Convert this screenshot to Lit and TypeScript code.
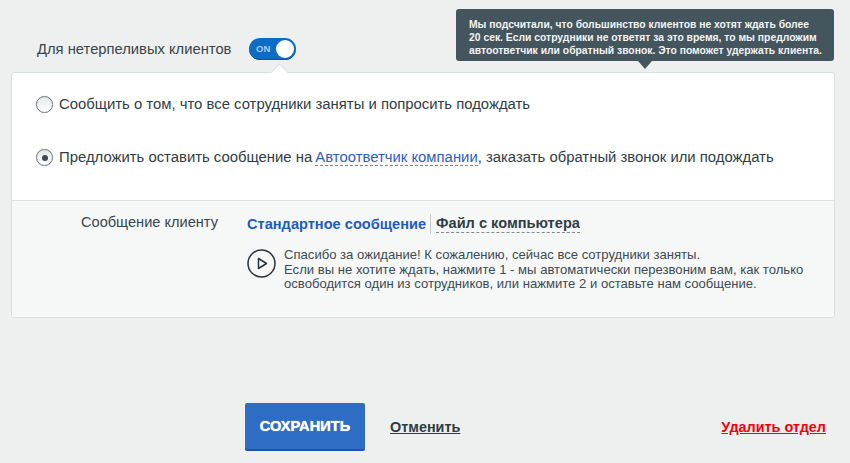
import { LitElement, html, css } from "lit";
import { customElement } from "lit/decorators.js";

@customElement("app-root")
export class AppRoot extends LitElement {
  static styles = css`
    :host { display: block; width: 850px; height: 463px; background: #eef0f0; position: relative; overflow: hidden;
      font-family: "Liberation Sans", Arial, sans-serif; color: #2f3d45; }
    .head { display: flex; align-items: center; height: 72px; padding: 0 0 0 37px; box-sizing: border-box; padding-top: 25px; }
    .head .label { font-size: 14.76px; width: 212px; color: #37454d; white-space: nowrap; }
    .toggle { width: 47px; height: 22px; border-radius: 11px; background: #0f6cc4; display: flex; align-items: center;
      justify-content: space-between; padding: 0 2px 0 7px; box-sizing: border-box; box-shadow: inset 0 -1px 0 #0a569f; }
    .toggle span { font-size: 9.5px; font-weight: 700; color: #a9cdee; }
    .knob { width: 18px; height: 18px; background: #fff; border-radius: 50%; }
    .card { margin: 0 15px 0 11px; background: #fff; border: 1px solid #d9e0e2; border-radius: 3px; position: relative; height: 246px; box-sizing: border-box; }
    .notch { position: absolute; left: 261px; top: -7px; width: 12px; height: 12px; background: #fff; border-left: 1px solid #d9e0e2; border-top: 1px solid #d9e0e2; transform: rotate(45deg) ; }
    .opts { height: 127px; box-sizing: border-box; padding: 22px 0 0 24px; display: flex; flex-direction: column; gap: 34px; }
    .opt { display: flex; align-items: center; gap: 6px; font-size: 14.87px; height: 19px; color: #2f3d45; white-space: nowrap; }
    .txt { padding-bottom: 2px; }
    .radio { width: 17px; height: 17px; border: 1px solid #6f7a80; border-radius: 50%; box-sizing: border-box; background: linear-gradient(#e4e7e8, #fff); display: flex; align-items: center; justify-content: center; box-shadow: 0 0 1px #9aa2a6; flex: none; }
    .radio.on::after { content: ""; width: 6px; height: 6px; border-radius: 50%; background: #3a4a55; }
    .link { color: #2d5ebf; border-bottom: 1px dashed #5b84d6; margin-left: -1px; }
    .bottom { background: #f6f8f8; border-top: 1px solid #d9e0e2; height: 117px; box-sizing: border-box; display: flex; padding-top: 13px; border-radius: 0 0 3px 3px; }
    .blabel { width: 235px; text-align: right; padding-right: 29px; box-sizing: border-box; font-size: 14.6px; line-height: 16px; color: #37454d; flex: none; white-space: nowrap; }
    .tabs { display: flex; align-items: center; font-size: 14.6px; font-weight: 700; height: 19px; }
    .tab1 { color: #1f5cbd; padding-right: 4px; border-right: 1px solid #c6cdd0; height: 20px; line-height: 20px; }
    .tab2 { margin-left: 5px; color: #2f3d45; border-bottom: 1px dashed #7f8a90; line-height: 17px; }
    .msg { display: flex; gap: 8px; margin-top: 15px; }
    .play { width: 29px; height: 29px; flex: none; margin-top: 1px; }
    .msgtext { font-size: 13.1px; line-height: 14.5px; color: #3d4a52; white-space: nowrap; }
    .actions { display: flex; align-items: center; margin-top: 85px; padding-left: 245px; padding-right: 24px; }
    .save { width: 120px; height: 48px; background: #2d6ec4; border: none; border-bottom: 2px solid #1d55a3; border-radius: 2px; box-sizing: border-box; color: #fff; font: 700 14.64px "Liberation Sans", Arial, sans-serif; text-shadow: 0 0 1px #fff; padding: 0; }
    .cancel { margin-left: 25px; font-size: 14.4px; font-weight: 700; color: #2f3d45; text-decoration: underline; }
    .del { margin-left: auto; font-size: 14.4px; font-weight: 700; color: #f4000f; text-decoration: underline; }
    .tip { position: absolute; left: 456px; top: 9px; width: 378px; height: 52px; background: #45555d; border-radius: 3px; box-sizing: border-box; padding: 9px 0 0 13px; font-size: 10.35px; font-weight: 700; line-height: 13px; color: #f2f4f5; white-space: nowrap; }
    .tip::after { content: ""; position: absolute; left: 182px; top: 52px; border: 7px solid transparent; border-top: 8px solid #45555d; border-bottom: 0; }
  `;

  render() {
    return html`
      <div class="head">
        <div class="label">Для нетерпеливых клиентов</div>
        <div class="toggle"><span>ON</span><div class="knob"></div></div>
      </div>
      <div class="card">
        <div class="notch"></div>
        <div class="opts">
          <div class="opt"><div class="radio"></div><span class="txt">Сообщить о том, что все сотрудники заняты и попросить подождать</span></div>
          <div class="opt"><div class="radio on"></div><span class="txt">Предложить оставить сообщение на <span class="link">Автоответчик компании</span>, заказать обратный звонок или подождать</span></div>
        </div>
        <div class="bottom">
          <div class="blabel">Сообщение клиенту</div>
          <div>
            <div class="tabs"><div class="tab1">Стандартное сообщение</div><div class="tab2">Файл с компьютера</div></div>
            <div class="msg">
              <svg class="play" viewBox="0 0 29 29" fill="none" stroke="#27343b" stroke-width="1.5"><circle cx="14.5" cy="14.5" r="13.5"/><path d="M11.5 9.5v10l8-5z" stroke-linejoin="round"/></svg>
              <div class="msgtext">Спасибо за ожидание! К сожалению, сейчас все сотрудники заняты.<br>Если вы не хотите ждать, нажмите 1 - мы автоматически перезвоним вам, как только<br>освободится один из сотрудников, или нажмите 2 и оставьте нам сообщение.</div>
            </div>
          </div>
        </div>
      </div>
      <div class="actions">
        <button class="save">СОХРАНИТЬ</button>
        <span class="cancel">Отменить</span>
        <span class="del">Удалить отдел</span>
      </div>
      <div class="tip">Мы подсчитали, что большинство клиентов не хотят ждать более<br>20 сек. Если сотрудники не ответят за это время, то мы предложим<br>автоответчик или обратный звонок. Это поможет удержать клиента.</div>
    `;
  }
}
